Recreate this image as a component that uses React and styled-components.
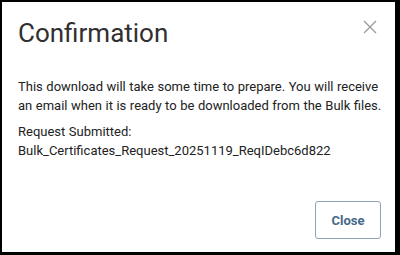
import React from "react"
import styled, { createGlobalStyle } from "styled-components"

const Global = createGlobalStyle`
html, body {
  margin: 0;
  padding: 0;
  background: #000;
}
* { box-sizing: border-box; }
`;

const Frame = styled.div`
width: 400px;
height: 255px;
background: #fff;
border-style: solid;
border-color: #000;
border-width: 2px 5px 3px 2px;
display: flex;
flex-direction: column;
font-family: Roboto, "Liberation Sans", sans-serif;
`;

const Header = styled.div`
display: flex;
justify-content: space-between;
align-items: flex-start;
padding: 16px 18px 0 16px;
`;

const Title = styled.div`
font-size: 26px;
line-height: 30px;
font-weight: 400;
color: #303030;
`;

const CloseIcon = styled.button`
margin-top: 2px;
padding: 0;
border: none;
background: none;
width: 14px;
height: 14px;
display: flex;
cursor: pointer;
`;

const Body = styled.div`
padding: 29px 8px 0 16px;
flex: 1;
`;

const Paragraph = styled.p`
margin: 0 0 ${p => p.$gap || 0}px 0;
font-size: 13px;
line-height: 19px;
word-spacing: 0.3px;
color: #222;
`;

const Footer = styled.div`
display: flex;
justify-content: flex-end;
padding: 0 14px 13px 0;
`;

const Button = styled.button`
width: 66px;
height: 38px;
background: #fff;
border: 1px solid #8ea3b6;
border-radius: 3px;
font-family: Roboto, "Liberation Sans", sans-serif;
font-size: 13px;
font-weight: 700;
color: #46698a;
cursor: pointer;
`;

const App = () => {
  return (
    <Frame>
      <Global />
      <Header>
        <Title>Confirmation</Title>
        <CloseIcon aria-label="close">
          <svg width="14" height="14" viewBox="0 0 14 14">
            <path d="M1 1 L13 13 M13 1 L1 13" stroke="#9a9a9a" strokeWidth="1.3" fill="none" />
          </svg>
        </CloseIcon>
      </Header>
      <Body>
        <Paragraph $gap={7}>
          This download will take some time to prepare. You will receive an email when it is ready to be downloaded from the Bulk files.
        </Paragraph>
        <Paragraph>
          Request Submitted:<br />
          Bulk_Certificates_Request_20251119_ReqIDebc6d822
        </Paragraph>
      </Body>
      <Footer>
        <Button>Close</Button>
      </Footer>
    </Frame>
  );
};

export default App;
